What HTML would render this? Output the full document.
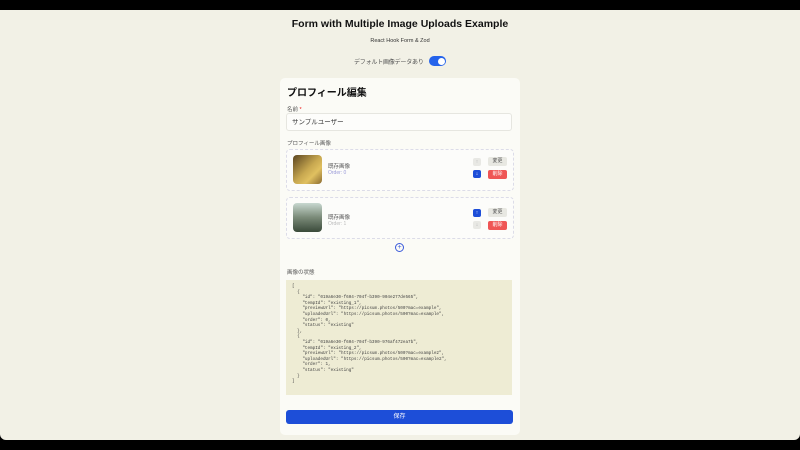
<!DOCTYPE html><html><head><meta charset="utf-8"><style>
body{margin:0;width:800px;height:450px;background:#000;font-family:"Liberation Sans","Noto Sans CJK JP",sans-serif;overflow:hidden;position:relative}
.page{position:absolute;left:0;top:10px;width:800px;height:430px;background:#f2f1e6;border-radius:0 0 6px 6px}
h1{position:absolute;top:8px;left:0;width:800px;text-align:center;font-size:10.5px;margin:0;font-weight:bold;color:#111}
.sub{position:absolute;top:28px;width:800px;text-align:center;font-size:5.5px;color:#333}
.tg{position:absolute;top:47px;left:354px;width:72px;font-size:6px;color:#555;white-space:nowrap;letter-spacing:-0.2px}
.sw{position:absolute;top:46px;left:429px;width:17px;height:10px;border-radius:5px;background:#2563eb}
.sw i{position:absolute;right:1.5px;top:1.5px;width:7px;height:7px;border-radius:50%;background:#fff}
.card{position:absolute;left:280px;top:68px;width:240px;height:357px;background:#fbfbf6;border-radius:5px}
.abs{position:absolute}
.lbl{font-size:5.5px;color:#555}
.item{position:absolute;left:6px;width:226px;height:40px;border:1px dashed #dcdce8;border-radius:4px;background:#fcfcfa}
.th{position:absolute;left:6px;top:5px;width:29px;height:29px;border-radius:4px}
.b{position:absolute;font-size:5px;text-align:center;border-radius:2px;line-height:9px}
pre{position:absolute;left:6px;top:202px;width:226px;height:115px;margin:0;background:#eeecd4;font-family:"Liberation Mono",monospace;font-size:4.3px;line-height:5.6px;color:#444;padding:4px 6px;box-sizing:border-box}
</style></head><body><div class="page">
<h1>Form with Multiple Image Uploads Example</h1>
<div class="sub">React Hook Form &amp; Zod</div>
<div class="tg">デフォルト画像データあり</div>
<div class="sw"><i></i></div>
<div class="card">
<div class="abs" style="left:7px;top:6px;font-size:10px;font-weight:bold;color:#111">プロフィール編集</div>
<div class="abs lbl" style="left:7px;top:27px">名前 <span style="color:#e11">*</span></div>
<div class="abs" style="left:6px;top:35px;width:226px;height:18px;border:1px solid #e6e6e0;border-radius:3px;background:#fdfdfb;font-size:6.5px;color:#333;line-height:18px;padding-left:5px;box-sizing:border-box">サンプルユーザー</div>
<div class="abs lbl" style="left:7px;top:61px">プロフィール画像</div>
<div class="item" style="top:71px">
<div class="th" style="background:linear-gradient(135deg,#5a4420,#c8a850 50%,#e0c060 70%,#8a6a30)"></div>
<div class="abs" style="left:41px;top:12px;font-size:5.5px;color:#555">既存画像</div>
<div class="abs" style="left:41px;top:20px;font-size:5px;color:#9a9ad8">Order: 0</div>
<div class="b" style="left:186px;top:8px;width:8px;height:8px;background:#e8e8e4;color:#aaa">↑</div>
<div class="b" style="left:186px;top:20px;width:8px;height:8px;background:#1d4ed8;color:#fff">↓</div>
<div class="b" style="left:201px;top:7px;width:19px;height:9px;background:#e8e8e2;color:#555">変更</div>
<div class="b" style="left:201px;top:20px;width:19px;height:9px;background:#ef5555;color:#fff">削除</div>
</div>
<div class="item" style="top:119px">
<div class="th" style="background:linear-gradient(180deg,#c8d8d0,#7a8a78 50%,#3a4a3a)"></div>
<div class="abs" style="left:41px;top:15px;font-size:5.5px;color:#555">既存画像</div>
<div class="abs" style="left:41px;top:23px;font-size:5px;color:#bbb">Order: 1</div>
<div class="b" style="left:186px;top:11px;width:8px;height:8px;background:#1d4ed8;color:#fff">↑</div>
<div class="b" style="left:186px;top:23px;width:8px;height:8px;background:#e8e8e4;color:#aaa">↓</div>
<div class="b" style="left:201px;top:10px;width:19px;height:9px;background:#e8e8e2;color:#555">変更</div>
<div class="b" style="left:201px;top:23px;width:19px;height:9px;background:#ef5555;color:#fff">削除</div>
</div>
<div class="abs" style="left:115px;top:165px;width:7px;height:7px;border:1px solid #3b5bdb;border-radius:50%;font-size:7px;line-height:7px;text-align:center;color:#3b5bdb">+</div>
<div class="abs lbl" style="left:7px;top:190px">画像の状態</div>
<pre>[
  {
    "id": "019a6e30-f604-704f-b390-904e277de565",
    "tempId": "existing_1",
    "previewUrl": "https://picsum.photos/500?mac=example",
    "uploadedUrl": "https://picsum.photos/500?mac=example",
    "order": 0,
    "status": "existing"
  },
  {
    "id": "019a6e30-f604-704f-b390-976af472ea7b",
    "tempId": "existing_2",
    "previewUrl": "https://picsum.photos/500?mac=example2",
    "uploadedUrl": "https://picsum.photos/500?mac=example2",
    "order": 1,
    "status": "existing"
  }
]</pre>
<div class="abs" style="left:6px;top:332px;width:227px;height:14px;background:#1d4ed8;border-radius:3px;color:#fff;font-size:6px;text-align:center;line-height:14px">保存</div>
</div>
</div></body></html>
